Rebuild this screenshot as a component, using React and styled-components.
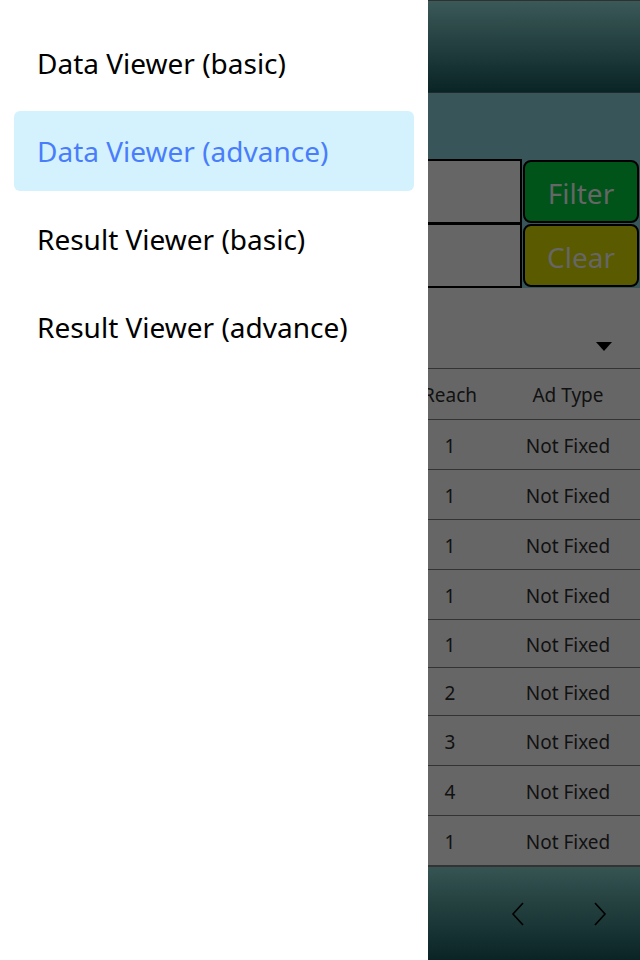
import React from "react";
import styled, { createGlobalStyle } from "styled-components";

const menuItems = [
  { label: "Data Viewer (basic)" },
  { label: "Data Viewer (advance)", active: true },
  { label: "Result Viewer (basic)" },
  { label: "Result Viewer (advance)" },
];

const rows = [
  { reach: 1, type: "Not Fixed", h: 50 },
  { reach: 1, type: "Not Fixed", h: 50 },
  { reach: 1, type: "Not Fixed", h: 50 },
  { reach: 1, type: "Not Fixed", h: 50 },
  { reach: 1, type: "Not Fixed", h: 48 },
  { reach: 2, type: "Not Fixed", h: 48 },
  { reach: 3, type: "Not Fixed", h: 50 },
  { reach: 4, type: "Not Fixed", h: 50 },
  { reach: 1, type: "Not Fixed", h: 50 },
];

export default function App() {
  return (
    <>
      <GlobalStyle />
      <Page>
        <Drawer>
          {menuItems.map((item) => (
            <MenuItem key={item.label} $active={item.active}>
              {item.label}
            </MenuItem>
          ))}
        </Drawer>
        <AppPane>
          <AppContent>
            <TopBar />
            <Band />
            <FilterRow>
              <FilterInput />
              <FilterButton $bg="#00541a">Filter</FilterButton>
              <FilterInput />
              <FilterButton $bg="#5a5a00">Clear</FilterButton>
            </FilterRow>
            <DropdownRow>
              <svg width="16" height="10" viewBox="0 0 16 10">
                <polygon points="0,0 16,0 8,9" fill="#000" />
              </svg>
            </DropdownRow>
            <Table>
              <TableRow $h={51}>
                <Cell />
                <Cell>Reach</Cell>
                <Cell>Ad Type</Cell>
              </TableRow>
              {rows.map((r, i) => (
                <TableRow key={i} $h={r.h}>
                  <Cell />
                  <Cell>{r.reach}</Cell>
                  <Cell>{r.type}</Cell>
                </TableRow>
              ))}
            </Table>
            <BottomBar>
              <NavButton>
                <svg width="14" height="24" viewBox="0 0 14 24">
                  <polyline points="12,1 2,12 12,23" fill="none" stroke="#000" strokeWidth="1.6" />
                </svg>
              </NavButton>
              <NavButton>
                <svg width="14" height="24" viewBox="0 0 14 24">
                  <polyline points="2,1 12,12 2,23" fill="none" stroke="#000" strokeWidth="1.6" />
                </svg>
              </NavButton>
            </BottomBar>
          </AppContent>
        </AppPane>
      </Page>
    </>
  );
}

const GlobalStyle = createGlobalStyle`
  body {
    margin: 0;
    font-family: "Noto Sans", "Open Sans", sans-serif;
  }
`;

const Page = styled.div`
  width: 640px;
  height: 960px;
  display: flex;
  overflow: hidden;
`;

const Drawer = styled.nav`
  width: 428px;
  flex-shrink: 0;
  background: #fff;
  display: flex;
  flex-direction: column;
  gap: 8px;
  padding: 23px 14px 0;
  box-sizing: border-box;
`;

const MenuItem = styled.div`
  height: 80px;
  display: flex;
  align-items: center;
  padding-left: 23px;
  border-radius: 6px;
  font-size: 28px;
  color: ${({ $active }) => ($active ? "#4a7dfb" : "#000")};
  background: ${({ $active }) => ($active ? "#d3f2fe" : "transparent")};
`;

const AppPane = styled.div`
  flex: 1;
  display: flex;
  justify-content: flex-end;
  overflow: hidden;
`;

const AppContent = styled.div`
  width: 640px;
  flex-shrink: 0;
  display: flex;
  flex-direction: column;
  background: #666;
`;

const TopBar = styled.div`
  height: 91px;
  border-top: 1px solid #303030;
  border-bottom: 1px solid #1c2a2a;
  background: linear-gradient(#3b5958, #0a2425);
`;

const Band = styled.div`
  height: 67px;
  background: #385659;
`;

const FilterRow = styled.div`
  display: grid;
  grid-template-columns: 1fr 118px;
  grid-template-rows: 64px 64px;
  background: #385659;
`;

const FilterInput = styled.div`
  background: #666;
  border: 2px solid #000;
  margin-top: -1px;
`;

const FilterButton = styled.div`
  margin: 0 1px 1px 1px;
  border: 2px solid #000;
  border-radius: 8px;
  background: ${({ $bg }) => $bg};
  color: #666;
  font-size: 28px;
  padding-top: 2px;
  display: flex;
  align-items: center;
  justify-content: center;
`;

const DropdownRow = styled.div`
  height: 81px;
  border-bottom: 1px solid #333;
  display: flex;
  justify-content: flex-end;
  align-items: flex-end;
  padding: 0 28px 16px 0;
  box-sizing: border-box;
`;

const Table = styled.div`
  display: flex;
  flex-direction: column;
`;

const TableRow = styled.div`
  height: ${({ $h }) => $h}px;
  box-sizing: border-box;
  border-bottom: 1px solid #333;
  display: grid;
  grid-template-columns: 1fr 92px 144px;
  align-items: center;
  padding-top: 2px;
`;

const Cell = styled.div`
  text-align: center;
  font-size: 19px;
  color: #111;
`;

const BottomBar = styled.div`
  flex: 1;
  border-top: 1px solid #333;
  background: linear-gradient(#355452, #0a2425);
  display: flex;
  justify-content: flex-end;
  align-items: center;
  gap: 68px;
  padding-right: 33px;
`;

const NavButton = styled.div`
  width: 14px;
  height: 24px;
  display: flex;
`;
